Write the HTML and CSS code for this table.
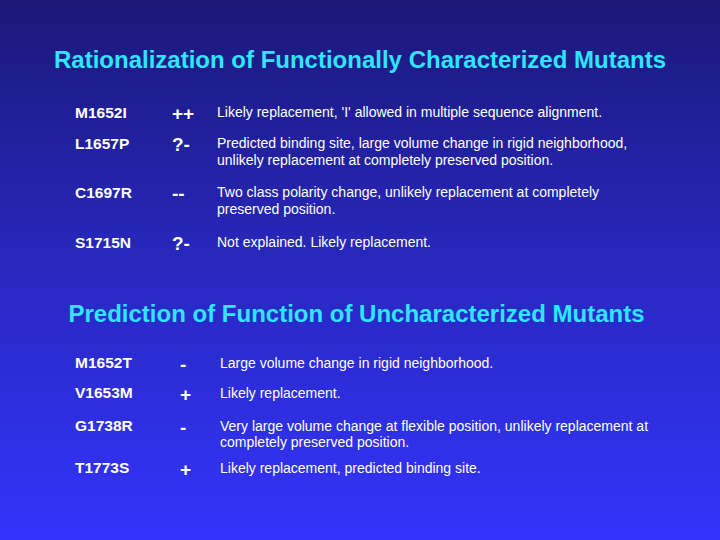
FILE: index.html
```
<!DOCTYPE html>
<html>
<head>
<meta charset="utf-8">
<link rel="stylesheet" href="styles.css">
</head>
<body>
<div class="slide">
  <h1 class="title t1">Rationalization of Functionally Characterized Mutants</h1>
  <div class="table s1">
    <div class="row r1"><span class="mut">M1652I</span><span class="sym">++</span><span class="desc">Likely replacement, 'I' allowed in multiple sequence alignment.</span></div>
    <div class="row r2"><span class="mut">L1657P</span><span class="sym">?-</span><span class="desc">Predicted binding site, large volume change in rigid neighborhood,<br>unlikely replacement at completely preserved position.</span></div>
    <div class="row r3"><span class="mut">C1697R</span><span class="sym">--</span><span class="desc">Two class polarity change, unlikely replacement at completely<br>preserved position.</span></div>
    <div class="row r4"><span class="mut">S1715N</span><span class="sym">?-</span><span class="desc">Not explained. Likely replacement.</span></div>
  </div>
  <h1 class="title t2">Prediction of Function of Uncharacterized Mutants</h1>
  <div class="table s2">
    <div class="row q1"><span class="mut">M1652T</span><span class="sym">-</span><span class="desc">Large volume change in rigid neighborhood.</span></div>
    <div class="row q2"><span class="mut">V1653M</span><span class="sym">+</span><span class="desc">Likely replacement.</span></div>
    <div class="row q3"><span class="mut">G1738R</span><span class="sym">-</span><span class="desc">Very large volume change at flexible position, unlikely replacement at<br>completely preserved position.</span></div>
    <div class="row q4"><span class="mut">T1773S</span><span class="sym">+</span><span class="desc">Likely replacement, predicted binding site.</span></div>
  </div>
</div>
</body>
</html>
```
FILE: styles.css
```
html, body {
  margin: 0;
  padding: 0;
}
body {
  width: 720px;
  height: 540px;
  overflow: hidden;
  background: linear-gradient(to bottom, #1b1878 0%, #2828c0 50%, #3434fc 100%);
  font-family: "Liberation Sans", Arial, sans-serif;
  color: #ffffff;
}
.slide {
  display: flex;
  flex-direction: column;
  height: 540px;
}
.title {
  margin: 0;
  font-size: 24px;
  font-weight: bold;
  color: #2ee6ff;
  text-align: center;
  line-height: 28px;
}
.t1 {
  margin-top: 46px;
}
.t2 {
  margin-top: 49px;
  padding-right: 7px;
}
.table {
  display: flex;
  flex-direction: column;
  padding-left: 75px;
}
.s1 {
  margin-top: 30px;
}
.s2 {
  margin-top: 27px;
}
.row {
  display: grid;
  grid-template-columns: 97px 45px 1fr;
  align-items: start;
}
.s2 .row {
  grid-template-columns: 97px 48px 1fr;
}
.mut {
  font-weight: bold;
  font-size: 15.5px;
  line-height: 17px;
}
.sym {
  font-weight: bold;
  font-size: 19px;
  line-height: 14px;
  height: 14px;
  padding-top: 3px;
}
.s2 .sym {
  padding-left: 8px;
  line-height: 13px;
  height: 13px;
}
.desc {
  font-size: 14px;
  line-height: 17px;
}
.s2 .mut, .s2 .desc {
  line-height: 16px;
}
.r2 { margin-top: 14px; }
.r3 { margin-top: 15px; }
.r4 { margin-top: 16px; }
.q2 { margin-top: 14px; }
.q3 { margin-top: 17px; }
.q4 { margin-top: 10px; }
```
